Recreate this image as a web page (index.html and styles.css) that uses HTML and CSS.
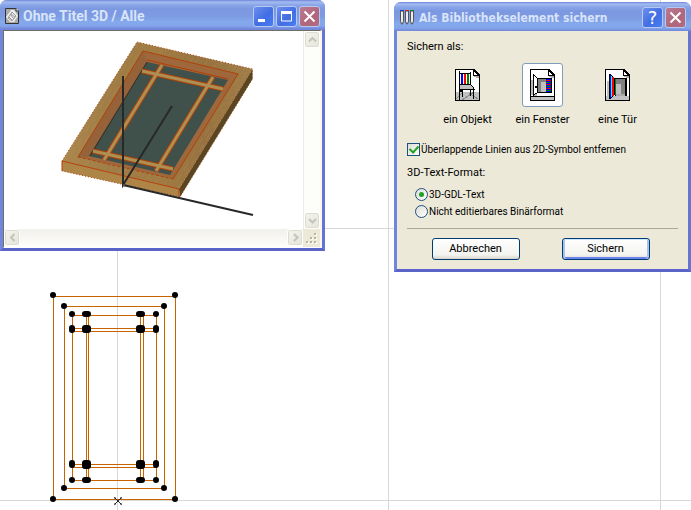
FILE: index.html
```html
<!DOCTYPE html>
<html lang="de">
<head>
<meta charset="utf-8">
<title>Als Bibliothekselement sichern</title>
<link rel="stylesheet" href="styles.css">
</head>
<body>
<main class="desktop">
  <svg class="plan" viewBox="0 0 132 216" width="132" height="216" aria-label="Grundriss">
    <g class="plan-lines" transform="translate(-47.5 -289.5)">
      <path d="M53 296H175V499H53ZM64 306H164V488H64ZM72 315H156V480H72ZM86 315V480M88 315V480M140 315V480M143 315V480M72 328H156M72 331H156M72 464H156M72 467H156"/>
    </g>
    <g class="plan-dots" transform="translate(-48 -290)">
      <path d="M53 295h0M175 295h0M53 499h0M175 499h0M64 306h0M164 306h0M64 488h0M164 488h0M72 314h0M85 314h3M139 314h3M156 314h0M72 328v2M156 328v2M72 463v2M156 463v2M72 480h0M85 480h3M139 480h3M156 480h0"/>
      <path d="M85 328h3v2h-3zM139 328h3v2h-3zM85 463h3v3h-3zM139 463h3v3h-3z"/>
    </g>
    <g transform="translate(-47.5 -289.5)">
      <path class="origin" d="M114 497l7 7M121 497l-7 7M113.500 497.500h2M119.500 497.500h2M113.500 503.500h2M119.500 503.500h2"/>
    </g>
  </svg>

  <section class="window view-window">
    <header class="titlebar">
      <svg class="app-icon" viewBox="0 0 14 16" width="14" height="16"><path d="M0 0h11l3 3v13H0z" fill="#a9a9a9"/><path d="M.5 15.500V.500h10l3 3v12z" fill="none" stroke="#333"/><path d="M11 0v3h3" fill="#eee" stroke="#333"/><path d="M1 9l5-7 3 0 4 6-4 6-4 0z" fill="#eee"/><path d="M3 10l4-6 4 4-4 5zM5 6l4 5M4 9l3 3M6 6l4 3" fill="none" stroke="#999"/></svg>
      <h1 class="title">Ohne Titel 3D / Alle</h1>
      <div class="controls">
        <button class="control" aria-label="Minimieren"><svg viewBox="0 0 17 17" width="17" height="17"><path d="M3 12.500h7" stroke="#fff" stroke-width="3"/></svg></button>
        <button class="control" aria-label="Maximieren"><svg viewBox="0 0 17 17" width="17" height="17"><path d="M3.500 4v9h10V4z" fill="none" stroke="#fff"/><path d="M3 4.500h11" stroke="#fff" stroke-width="3"/></svg></button>
        <button class="control close" aria-label="Schließen"><svg viewBox="0 0 17 17" width="17" height="17"><path d="M3.500 3.500l10 10M13.500 3.500l-10 10" stroke="#fff" stroke-width="2"/></svg></button>
      </div>
    </header>
    <div class="view">
      <svg class="scene" viewBox="4 31 299 198" preserveAspectRatio="xMinYMin meet" aria-label="3D-Ansicht">
        <defs>
          <linearGradient id="wood" x1="0" y1="0" x2="1" y2="0"><stop offset="0" stop-color="#ac884e"/><stop offset=".25" stop-color="#a07c46"/><stop offset=".5" stop-color="#a07b42"/><stop offset=".75" stop-color="#977240"/><stop offset="1" stop-color="#a07e48"/></linearGradient>
          <pattern id="grain" width="9" height="14" patternUnits="userSpaceOnUse" patternTransform="rotate(31)"><path d="M2 0v10M6 5v9" stroke="#b8965a" stroke-opacity=".25"/></pattern>
        </defs>
        <path d="M179 189L252.500 69V79L180 197z" fill="#584623"/>
        <path d="M62 161L179 189L180 197L62 171z" fill="#ad8547"/>
        <path d="M137 42L252.500 69L179 189L62 161z" fill="url(#wood)"/>
        <path d="M137 42L252.500 69L179 189L62 161z" fill="url(#grain)"/>
        <path d="M143 51L238 74L173 179L78 157z" fill="#9e683c"/>
        <path d="M143 51L147 61L89 157L78 157z" fill="#96623a"/>
        <path d="M147 62L228 80L170 175L89 156z" fill="#40504a"/>
        <path d="M147 60L228 79" stroke="#b63d08"/>
        <path d="M147 62L90 156" stroke="#392b20"/>
        <g stroke="#b04208" stroke-width="5"><path d="M142 71L223 89M93 151L173 169M162 65L104 160M213 77L156 171"/></g>
        <g stroke="#ad8f54" stroke-width="3"><path d="M142 71L223 89M93 151L173 169M162 65L104 160M213 77L156 171"/></g>
        <path d="M78 157L173 179" fill="none" stroke="#b04208" stroke-dasharray="3 2"/>
        <path d="M78 157L143 51L238 74L173 179" fill="none" stroke="#b04208"/>
        <path d="M62 161L137 42L252.500 69V79L180 197L62 171M179 189L252.500 69" fill="none" stroke="#a9450c" stroke-dasharray="1 2"/>
        <path d="M62 171V161L179 189V197" fill="none" stroke="#b63d08"/>
        <path d="M123 76V185L172 106M123 185L253 215" fill="none" stroke="#282828" stroke-width="2"/>
        <circle cx="124" cy="185" r="1" fill="#fff" stroke="#222"/>
      </svg>
      <div class="scrollbar vertical">
        <button class="arrow" aria-label="Nach oben"><svg viewBox="0 0 9 9" width="9" height="9"><path d="M1 6.500L4.500 3 8 6.500"/></svg></button>
        <button class="arrow" aria-label="Nach unten"><svg viewBox="0 0 9 9" width="9" height="9"><path d="M1 3L4.500 6.500 8 3"/></svg></button>
      </div>
      <div class="scrollbar horizontal">
        <button class="arrow" aria-label="Nach links"><svg viewBox="0 0 9 9" width="9" height="9"><path d="M6.500 1L3 4.500 6.500 8"/></svg></button>
        <button class="arrow" aria-label="Nach rechts"><svg viewBox="0 0 9 9" width="9" height="9"><path d="M3 1l3.500 3.500L3 8"/></svg></button>
      </div>
      <div class="grip"><svg viewBox="0 0 17 16" width="17" height="16"><path d="M13 6h0M9 10h0M13 10h0M5 14h0M9 14h0M13 14h0" stroke="#fff" stroke-width="2" stroke-linecap="square"/><path d="M11 4h2v2h-2zM7 8h2v2H7zM11 8h2v2h-2zM3 12h2v2H3zM7 12h2v2H7zM11 12h2v2h-2z" fill="#b8b4a2"/></svg></div>
    </div>
  </section>

  <section class="window dialog" role="dialog" aria-labelledby="dialog-title">
    <header class="titlebar">
      <svg class="app-icon" viewBox="0 0 16 16" width="16" height="16"><path d="M1.500 1v10l1 3h1l1-3V1zM6.500 1v10l1 3h1l1-3V1zM11.500 1v10l1 3h1l1-3V1z" fill="#d8d8d8" stroke="#555"/><path d="M3 2v10M8 2v10M13 2v10" stroke="#fff"/><path d="M1 .5h4" stroke="#14c"/><path d="M6 .5h4" stroke="#d22"/><path d="M11 .5h4" stroke="#083"/></svg>
      <h1 class="title wide" id="dialog-title">Als Bibliothekselement sichern</h1>
      <div class="controls">
        <button class="control help" aria-label="Hilfe">?</button>
        <button class="control close" aria-label="Schließen"><svg viewBox="0 0 17 17" width="17" height="17"><path d="M3.500 3.500l10 10M13.500 3.500l-10 10" stroke="#fff" stroke-width="2"/></svg></button>
      </div>
    </header>
    <form class="form">
      <h2 class="heading">Sichern als:</h2>
      <div class="kinds">
        <button type="button" class="kind" aria-pressed="false">
          <span class="picture"><svg viewBox="0 0 25 32" width="25" height="32" shape-rendering="crispEdges"><path d="M0 0h19l6 6v26H0z"/><path d="M1 1h17v6h6v24H1z" fill="#fff"/><path d="M19 2v1h1v1h1v1h1v1h-3z" fill="#fff"/><path d="M19 7h5v2h-3v-1h-2z" fill="#aaa"/><path d="M1 23h23v8H1z" fill="#c0c0c0"/><path d="M1 30l6-6M7 31l12-8M14 24l9 6" stroke="#888"/><path d="M4 4h12v12H4z" fill="#fff"/><path d="M6 5h2v10H6z" fill="#00f"/><path d="M9 5h2v10H9z" fill="#f00"/><path d="M12 5h2v10h-2z" fill="#008000"/><path d="M4 16h12l3 4H5z" fill="#c0c0c0"/><path d="M4 2h1v18H4zM15 3h1v13h-1zM5 4h10v1H5zM5 15h10v1H5zM16 16h1v1h-1zM17 17h1v1h-1zM18 18h1v2h-1zM4 20h16v1H4zM4 21h1v10H4zM5 21h2v2H5zM18 21h1v9h-1zM7 21h1v7H7zM15 21h1v6h-1z"/></svg></span>
          <span>ein Objekt</span>
        </button>
        <button type="button" class="kind selected" aria-pressed="true">
          <span class="picture"><svg viewBox="0 0 25 32" width="25" height="32" shape-rendering="crispEdges"><path d="M0 0h19l6 6v26H0z"/><path d="M1 1h17v6h6v24H1z" fill="#fff"/><path d="M19 2v1h1v1h1v1h1v1h-3z" fill="#fff"/><path d="M19 7h5v2h-3v-1h-2z" fill="#aaa"/><path d="M1 28h23v3H1z" fill="#c0c0c0"/><path d="M1 27h23v1H1z"/><path d="M1 11h2v15H1zM4 25h3v2H4z" fill="#b8b8b8"/><path d="M8 9h14v15H8z"/><path d="M8 10h8v13H8z" fill="#808080"/><path d="M11 13h5v10h-5z" fill="#c0c0c0"/><path d="M4 6l4 5v13l-4 2z" fill="#fff"/><path d="M3 5h1v22H3zM4 6h1v1H4zM5 7h1v1H5zM6 8h1v1H6zM7 9h1v15H7zM5 25h2v-1H5zM4 26h1v-1H4zM5 17h2v2H5z"/><path d="M16 10h5v13h-5z" fill="#00f"/><path d="M16 11h5v1h-5zM16 15h5v1h-5zM16 19h5v1h-5z" fill="#f00"/><path d="M16 13h5v1h-5zM16 17h5v1h-5zM16 21h5v1h-5z" fill="#080"/></svg></span>
          <span>ein Fenster</span>
        </button>
        <button type="button" class="kind" aria-pressed="false">
          <span class="picture"><svg viewBox="0 0 25 32" width="25" height="32" shape-rendering="crispEdges"><path d="M0 0h19l6 6v26H0z"/><path d="M1 1h17v6h6v24H1z" fill="#fff"/><path d="M19 2v1h1v1h1v1h1v1h-3z" fill="#fff"/><path d="M19 7h5v2h-3v-1h-2z" fill="#aaa"/><path d="M1 27h23v4H1z" fill="#c0c0c0"/><path d="M2 12h2v15H2z" fill="#c0c0c0"/><path d="M10 9h12v18H10z"/><path d="M11 10h9v17h-9z" fill="#808080"/><path d="M11 15h5v10h-5z" fill="#c0c0c0"/><path d="M11 25h9v2h-9z" fill="#aaa"/><path d="M4 5h1l5 4v17l-5 4H4z"/><path d="M5 6h1v23H5z" fill="#00f"/><path d="M6 7h1v21H6z" fill="#0ff"/><path d="M7 8h2v19H7z" fill="#f00"/><path d="M10 10h1v16h-1z" fill="#080"/></svg></span>
          <span>eine Tür</span>
        </button>
      </div>
      <label class="choice overlap"><input type="checkbox" checked>Überlappende Linien aus 2D-Symbol entfernen</label>
      <fieldset class="formats">
        <legend class="heading">3D-Text-Format:</legend>
        <label class="choice"><input type="radio" name="format" checked>3D-GDL-Text</label>
        <label class="choice"><input type="radio" name="format">Nicht editierbares Binärformat</label>
      </fieldset>
      <div class="actions">
        <button type="button" class="push">Abbrechen</button>
        <button type="button" class="push default">Sichern</button>
      </div>
    </form>
  </section>
</main>
</body>
</html>
```
FILE: styles.css
```css
* { box-sizing: border-box; }

body {
  margin: 0;
  font: 11px/14px Roboto, "Noto Sans", sans-serif;
  color: #000;
}

button {
  font: inherit;
  color: inherit;
  padding: 0;
}

.desktop {
  position: relative;
  min-height: 100vh;
  overflow: hidden;
  background:
    repeating-linear-gradient(to right, transparent 0 117px, #d8d8d8 117px 118px, transparent 118px 388px, #d8d8d8 388px 389px, transparent 389px 543px),
    repeating-linear-gradient(to bottom, transparent 0 228px, #d8d8d8 228px 229px, transparent 229px 272px),
    #fff;
}

.plan {
  position: absolute;
  left: 48px;
  top: 290px;
}

.plan-lines { fill: none; stroke: #c86400; }
.plan-dots { stroke: #000; stroke-width: 6; stroke-linecap: round; stroke-linejoin: round; }
.origin { fill: none; stroke: #222; }

.window {
  position: absolute;
  border: 3px solid #7086dc;
  border-top: 0;
  border-right-color: #6475d0;
  border-bottom-color: #5a63c8;
  border-radius: 7px 7px 0 0;
  background: #ece9d8;
}

.view-window { left: 0; top: 0; width: 325px; }
.dialog { left: 394px; top: 2px; width: 297px; }

.titlebar {
  display: flex;
  align-items: center;
  height: 29px;
  margin: 0 -3px;
  padding: 2px 5px 0;
  gap: 4px;
  border-radius: 7px 7px 0 0;
  background: linear-gradient(#7085d9 0, #a3bcf1 2px, #8aa6e8 5px, #7b98e0 9px, #7d9ae3 16px, #84a9ec 22px, #83a5ea 26px, #7186db 29px);
}

.view-window .titlebar { height: 30px; }

.title {
  flex: 1;
  margin: 0;
  font: bold 14px/16px Roboto, "Noto Sans", sans-serif;
  color: #d8e4f8;
  white-space: nowrap;
}

.title.wide { font: bold 12px/16px "DejaVu Sans Condensed", "DejaVu Sans", sans-serif; }

.controls { display: flex; gap: 2px; }

.control {
  display: grid;
  place-items: center;
  width: 21px;
  height: 21px;
  border: 1px solid #b8c9f1;
  border-radius: 3px;
  background: linear-gradient(135deg, #6e8fec, #426ee4 55%, #4a7cf0);
  color: #fff;
}

.control.close { background: linear-gradient(135deg, #ba7a92, #b0667b 60%, #b36b82); }
.control.help { font: 18px/18px "DejaVu Sans", sans-serif; }

.view {
  display: grid;
  grid-template-columns: 1fr 17px;
  grid-template-rows: auto 18px;
  border: 1px solid #716f64;
  border-right: 2px solid #f8f6ee;
  border-bottom: 1px solid #fff;
  background: #fff;
}

.scene { display: block; width: 100%; }

.scrollbar {
  display: flex;
  justify-content: space-between;
  background: #fdfdf9;
}

.vertical { flex-direction: column; border-left: 1px solid #eeede5; }
.horizontal { background: linear-gradient(#f2f0eb, #fefefb); }

.arrow {
  display: grid;
  place-items: center;
  width: 16px;
  height: 17px;
  border: 1px solid #fff;
  border-radius: 3px;
  background: linear-gradient(135deg, #f4f4ef, #e6e5d9);
  box-shadow: inset 0 0 0 1px #dedccf;
}

.arrow path { fill: none; stroke: #c5c4b9; stroke-width: 2; }
.grip { background: #ece9d8; }

.form {
  display: flex;
  flex-direction: column;
  padding: 9px 10px;
}

.heading {
  margin: 0;
  padding: 0;
  font-size: 11px;
  font-weight: normal;
}

.kinds {
  display: flex;
  justify-content: center;
  margin-top: 9px;
}

.kind {
  display: flex;
  flex-direction: column;
  align-items: center;
  gap: 6px;
  width: 75px;
  border: 0;
  background: none;
}

.picture {
  display: grid;
  place-items: center;
  width: 41px;
  height: 44px;
  border: 1px solid transparent;
  border-radius: 3px;
}

.selected .picture { border-color: #7f9db9; background: #fff; }

.choice {
  display: flex;
  align-items: center;
  gap: 1px;
  height: 17px;
  font-size: 10px;
}

.overlap { margin-top: 14px; }

.choice input {
  appearance: none;
  display: grid;
  place-items: center;
  width: 13px;
  height: 13px;
  margin: 0;
  border: 1px solid #1c5180;
  background: linear-gradient(135deg, #dcdcd7, #fff);
}

.choice input[type="radio"] { border-radius: 50%; }

.choice input[type="radio"]:checked::after {
  content: "";
  width: 5px;
  height: 5px;
  border-radius: 50%;
  background: #21a121;
}

.choice input[type="checkbox"]:checked::after {
  content: "";
  width: 4px;
  height: 7px;
  margin-bottom: 2px;
  border: solid #21a121;
  border-width: 0 2px 2px 0;
  transform: rotate(42deg);
}

.formats {
  margin: 8px 0 0;
  padding: 0;
  border: 0;
}

.formats legend { margin-bottom: 6px; }
.formats .choice { margin-left: 8px; }

.actions {
  display: flex;
  justify-content: center;
  gap: 42px;
  margin-top: 8px;
  padding: 9px 4px 0 0;
  border-top: 1px solid #aca899;
}

.push {
  width: 88px;
  height: 22px;
  border: 1px solid #003c74;
  border-radius: 3px;
  background: linear-gradient(#fff, #f3f3ef 80%, #d8d3c8);
}

.default { box-shadow: inset 0 1px #cee7ff, inset 2px 0 #a7c2f0, inset -2px 0 #a7c2f0, inset 0 -2px #6982ee; }
```
